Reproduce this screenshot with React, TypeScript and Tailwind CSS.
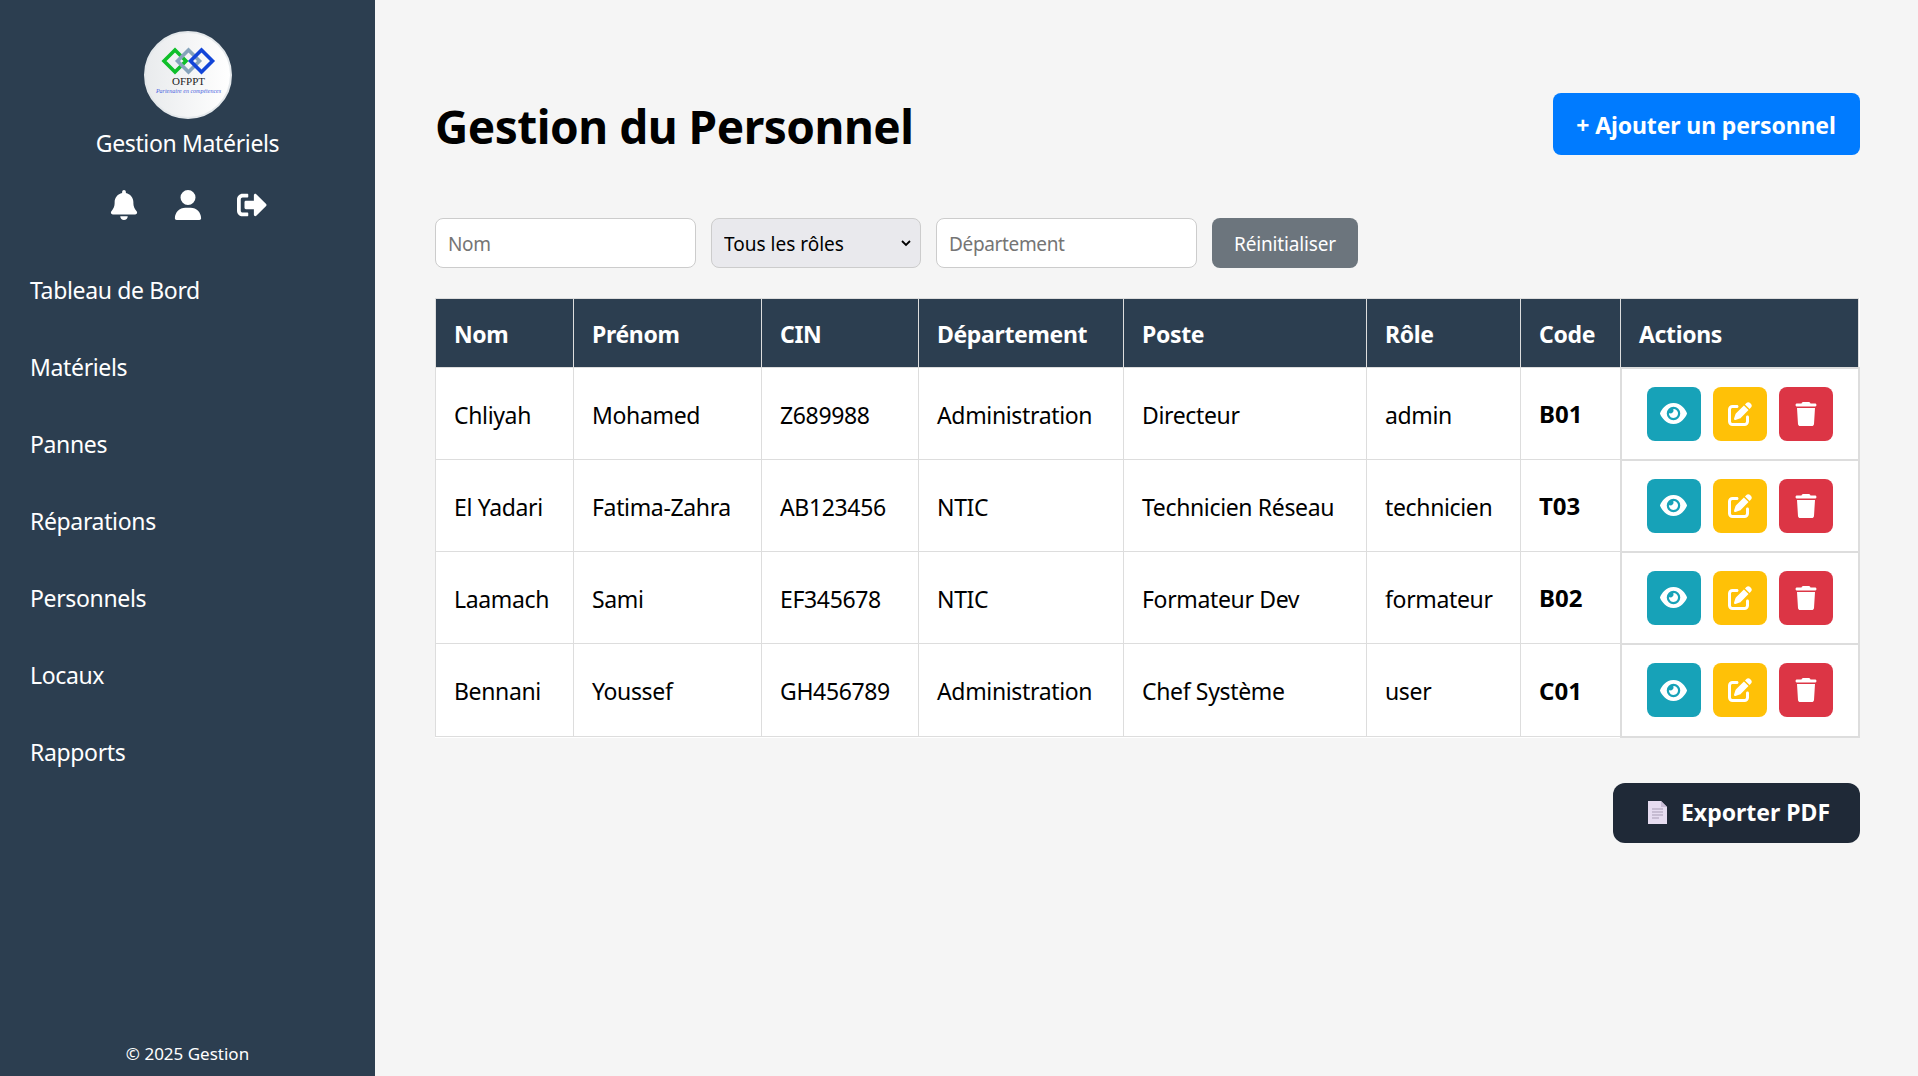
import React from 'react';
import { FaBell, FaUser, FaEye, FaPenToSquare, FaTrash } from 'react-icons/fa6';
import { FaSignOutAlt } from 'react-icons/fa';

const links = ['Tableau de Bord', 'Matériels', 'Pannes', 'Réparations', 'Personnels', 'Locaux', 'Rapports'];

const people = [
    { nom: 'Chliyah', prenom: 'Mohamed', cin: 'Z689988', dept: 'Administration', poste: 'Directeur', role: 'admin', code: 'B01' },
    { nom: 'El Yadari', prenom: 'Fatima-Zahra', cin: 'AB123456', dept: 'NTIC', poste: 'Technicien Réseau', role: 'technicien', code: 'T03' },
    { nom: 'Laamach', prenom: 'Sami', cin: 'EF345678', dept: 'NTIC', poste: 'Formateur Dev', role: 'formateur', code: 'B02' },
    { nom: 'Bennani', prenom: 'Youssef', cin: 'GH456789', dept: 'Administration', poste: 'Chef Système', role: 'user', code: 'C01' },
];

const headers = ['Nom', 'Prénom', 'CIN', 'Département', 'Poste', 'Rôle', 'Code', 'Actions'];
const widths = ['w-[138px]', 'w-[188px]', 'w-[157px]', 'w-[205px]', 'w-[243px]', 'w-[154px]', 'w-[100px]', 'w-[238px]'];

const Logo = () => (
    <div className="h-[88px] w-[88px] overflow-hidden rounded-full border-2 border-[#e4e8eb] bg-gradient-to-r from-[#e9ebed] to-white">
        <svg viewBox="2 2 84 84" className="h-full w-full">
            <g fill="none" strokeWidth="3.6">
                <path d="M31 19 L42 30 L31 41 L20 30 Z" stroke="#0fbf2a" />
                <path d="M44.5 19 L55.5 30 L44.5 41 L33.5 30 Z" stroke="#86a3bb" />
                <path d="M57.5 19 L68.5 30 L57.5 41 L46.5 30 Z" stroke="#1245d8" />
            </g>
            <text x="44.5" y="54" textAnchor="middle" fontFamily="'Liberation Serif', serif" fontSize="11" fill="#222">OFPPT</text>
            <text x="44.5" y="62" textAnchor="middle" fontFamily="'Liberation Serif', serif" fontSize="6" fontStyle="italic" fill="#4a62e0">Partenaire en compétences</text>
        </svg>
    </div>
);

const DocIcon = () => (
    <svg viewBox="0 0 19 23" className="h-[23px] w-[19px]">
        <path d="M0 0 H13 L19 6 V23 H0 Z" fill="#e6dcf0" />
        <path d="M13 0 L19 6 H13 Z" fill="#c9bdd6" />
        <path d="M4 8 H15 M4 11 H15 M4 14 H15 M4 17 H11" stroke="#a89db5" strokeWidth="1" />
    </svg>
);

const ActionBtn = ({ color, children }: { color: string; children: React.ReactNode }) => (
    <button className={`flex h-[54px] w-[54px] items-center justify-center rounded-lg text-white ${color}`}>
        {children}
    </button>
);

export default function App() {
    return (
        <div className="flex h-screen w-full overflow-hidden bg-[#f5f5f5] font-['Noto_Sans',sans-serif] text-black">
            <aside className="flex w-[375px] shrink-0 flex-col bg-[#2c3e50] text-white">
                <div className="flex flex-col items-center pt-[31px]">
                    <Logo />
                    <p className="mt-[8px] text-[23px] leading-[32px] tracking-[-0.35px]">Gestion Matériels</p>
                    <div className="mt-[31px] flex items-center gap-[34px] text-[30px]">
                        <FaBell />
                        <FaUser />
                        <FaSignOutAlt />
                    </div>
                </div>
                <nav className="mt-[54px] flex flex-col gap-[45px] pl-[30px] text-[23px] leading-[32px] tracking-[-0.35px]">
                    {links.map((l) => (
                        <a key={l}>{l}</a>
                    ))}
                </nav>
                <p className="mt-auto pb-[10px] text-center text-[17px] leading-[24px]">© 2025 Gestion</p>
            </aside>

            <main className="flex-1 pl-[60px] pr-[60px]">
                <div className="flex items-start justify-between pt-[93px]">
                    <h1 className="mt-[5px] text-[46px] font-bold leading-[56px] tracking-[-0.5px]">Gestion du Personnel</h1>
                    <button className="h-[62px] w-[307px] rounded-lg bg-[#007bff] pt-[2px] text-[23px] font-bold tracking-[-0.12px] text-white">
                        + Ajouter un personnel
                    </button>
                </div>

                <div className="mt-[63px] flex gap-[15px]">
                    <input placeholder="Nom" className="h-[50px] w-[261px] rounded-lg border border-[#ccc] bg-white px-3 pt-[2px] text-[19px] tracking-[-0.35px] placeholder:text-[#757575]" />
                    <div className="relative">
                        <select className="h-[50px] w-[210px] appearance-none rounded-lg border border-[#ccc] bg-[#e9e9ed] pl-3 pt-[2px] text-[19px]">
                            <option>Tous les rôles</option>
                        </select>
                        <svg viewBox="0 0 12 12" className="absolute right-[9px] top-[19px] h-3 w-3" fill="none" stroke="#000" strokeWidth="1.8">
                            <path d="M2 4 L6 8 L10 4" />
                        </svg>
                    </div>
                    <input placeholder="Département" className="h-[50px] w-[261px] rounded-lg border border-[#ccc] bg-white px-3 pt-[2px] text-[19px] tracking-[-0.35px] placeholder:text-[#757575]" />
                    <button className="h-[50px] w-[146px] rounded-lg bg-[#6c757d] pt-[2px] text-[19px] tracking-[-0.15px] text-white">Réinitialiser</button>
                </div>

                <table className="mt-[30px] w-full table-fixed border-collapse bg-white text-[23px] tracking-[-0.35px]">
                    <thead>
                        <tr className="h-[69px] bg-[#2c3e50] text-white">
                            {headers.map((h, i) => (
                                <th key={h} className={`border border-[#ddd] pl-[18px] pt-[2px] text-left font-bold ${widths[i]}`}>
                                    {h}
                                </th>
                            ))}
                        </tr>
                    </thead>
                    <tbody>
                        {people.map((p, i) => (
                            <tr key={p.code} className={i === 3 ? 'h-[93px]' : 'h-[92px]'}>
                                <td className="border border-[#ddd] pl-[18px] pt-[3px]">{p.nom}</td>
                                <td className="border border-[#ddd] pl-[18px] pt-[3px]">{p.prenom}</td>
                                <td className="border border-[#ddd] pl-[18px] pt-[3px]">{p.cin}</td>
                                <td className="border border-[#ddd] pl-[18px] pt-[3px]">{p.dept}</td>
                                <td className="border border-[#ddd] pl-[18px] pt-[3px]">{p.poste}</td>
                                <td className="border border-[#ddd] pl-[18px] pt-[3px]">{p.role}</td>
                                <td className="border border-[#ddd] pl-[18px] pt-[1px] text-[24px] font-bold tracking-normal">{p.code}</td>
                                <td className="border-2 border-[#ddd]">
                                    <div className="flex justify-center gap-3">
                                        <ActionBtn color="bg-[#17a2b8]"><FaEye size={27} /></ActionBtn>
                                        <ActionBtn color="bg-[#ffc107]"><FaPenToSquare size={24} /></ActionBtn>
                                        <ActionBtn color="bg-[#dc3545]"><FaTrash size={24} /></ActionBtn>
                                    </div>
                                </td>
                            </tr>
                        ))}
                    </tbody>
                </table>

                <div className="mt-[45px] flex justify-end">
                    <button className="flex h-[60px] w-[247px] items-center justify-center gap-[14px] rounded-xl bg-[#1f2937] pl-[6px] text-[23px] font-bold text-white">
                        <DocIcon />
                        Exporter PDF
                    </button>
                </div>
            </main>
        </div>
    );
}
